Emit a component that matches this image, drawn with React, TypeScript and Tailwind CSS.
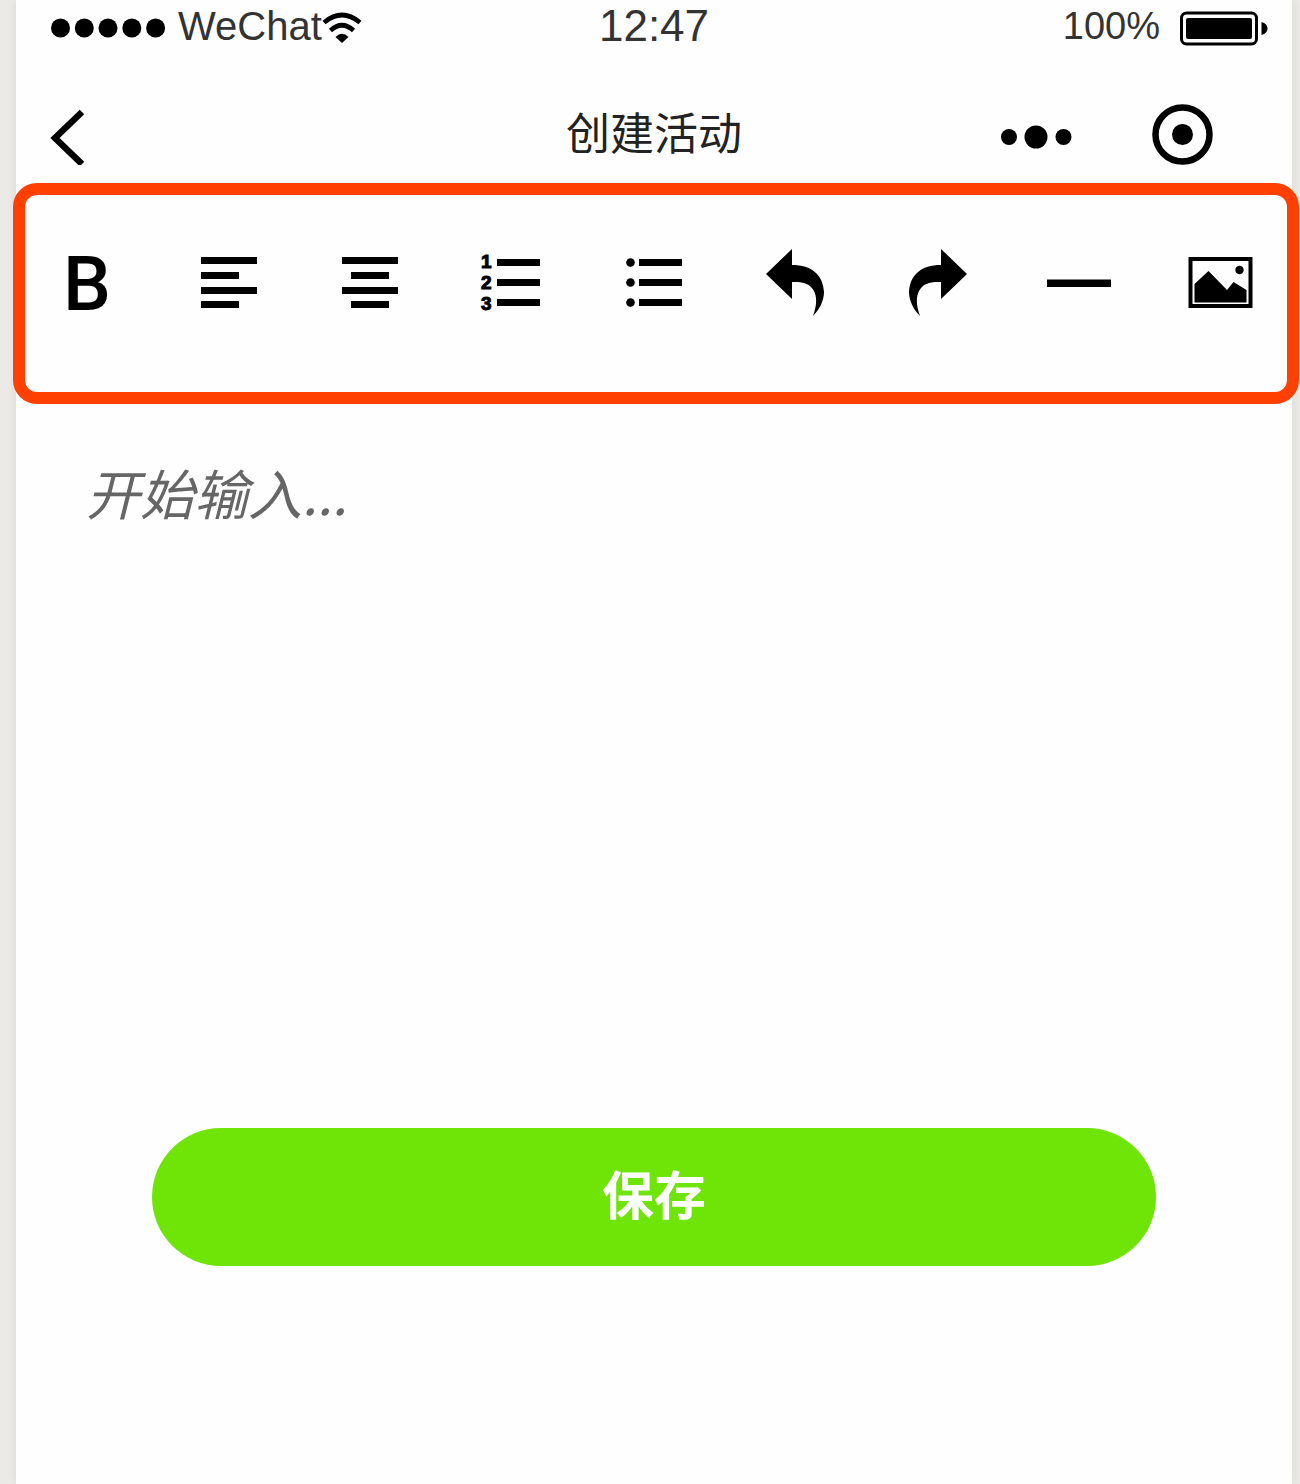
import React, { useState } from 'react';

interface Tool {
  name: string;
  icon: React.ReactNode;
}

const UNDO_PATH =
  'M2 23 L28 -2 V14 C48 14 59 24 60 41 C60 50 55 59 49 65 C53 54 53 46 50 40 C46 32 38 30.5 28 31 V48 Z';

const tools: Tool[] = [
  {
    name: '加粗',
    icon: <span className="pt-0.5 font-['Roboto',sans-serif] text-[76px] font-medium leading-16">B</span>,
  },
  {
    name: '左对齐',
    icon: <path d="M4 6h56v7H4zM4 21h38v7H4zM4 36h56v7H4zM4 50h38v7H4z" />,
  },
  {
    name: '居中对齐',
    icon: <path d="M4 6h56v7H4zM13 21h38v7H13zM4 36h56v7H4zM13 50h38v7H13z" />,
  },
  {
    name: '有序列表',
    icon: (
      <>
        <path d="M17 8h43v7H17zM17 28h43v7H17zM17 48h43v7H17z" />
        <g className="font-['Liberation_Sans',sans-serif] text-[19px] font-bold" stroke="currentColor" strokeWidth="1">
          <text x="1" y="17">1</text>
          <text x="1" y="38">2</text>
          <text x="1" y="59">3</text>
        </g>
      </>
    ),
  },
  {
    name: '无序列表',
    icon: (
      <>
        <path d="M17 8h43v7H17zM17 28h43v7H17zM17 48h43v7H17z" />
        <circle cx="8.5" cy="11.5" r="4.3" />
        <circle cx="8.5" cy="31.5" r="4.3" />
        <circle cx="8.5" cy="51.5" r="4.3" />
      </>
    ),
  },
  { name: '撤销', icon: <path d={UNDO_PATH} /> },
  { name: '重做', icon: <path d={UNDO_PATH} transform="translate(63 0) scale(-1 1)" /> },
  { name: '分割线', icon: <path d="M0 28.5h64V36H0z" /> },
  {
    name: '插入图片',
    icon: (
      <>
        <rect x="1.5" y="8" width="60" height="47" fill="none" stroke="currentColor" strokeWidth="4" />
        <path d="M5.5 33 L19.5 20 L38 39 L44.5 31 L57.5 39 V51.5 H5.5 Z" />
        <circle cx="50.5" cy="19" r="4.2" />
      </>
    ),
  },
];

const StatusBar: React.FC = () => (
  <div className="grid h-[52px] grid-cols-[1fr_auto_1fr] items-center text-[#333]">
    <div className="flex items-center pl-[34px]">
      <svg className="mr-3 mt-1 h-5 w-[116px] text-black" viewBox="0 0 116 20" fill="currentColor">
        <circle cx="10.5" cy="10" r="9.5" />
        <circle cx="34.3" cy="10" r="9.5" />
        <circle cx="58" cy="10" r="9.5" />
        <circle cx="81.8" cy="10" r="9.5" />
        <circle cx="105.6" cy="10" r="9.5" />
      </svg>
      <span className="text-[40px] leading-[52px]">WeChat</span>
      <svg className="mt-1 h-8 w-10 text-black" viewBox="0 0 40 32" fill="none" stroke="currentColor" strokeWidth="4.6">
        <path d="M2 10.5 Q20 -4.5 38 10.5" />
        <path d="M8.5 18.5 Q20 8 31.5 18.5" />
        <path d="M13.5 25 Q20 18.5 26.5 25 L20 31 Z" fill="currentColor" stroke="none" />
      </svg>
    </div>
    <span className="text-[44px] leading-[52px]">12:47</span>
    <div className="flex items-center justify-end gap-5 pr-6">
      <span className="text-[38px] leading-[52px]">100%</span>
      <svg className="mt-1 h-9 w-[88px] text-black" viewBox="0 0 88 36" fill="currentColor">
        <rect x="1.5" y="3" width="75" height="31" rx="5" fill="none" stroke="currentColor" strokeWidth="3" />
        <rect x="6" y="8" width="66" height="21" rx="2" />
        <path d="M81.5 12 C89.5 14 89.5 23 81.5 25 Z" />
      </svg>
    </div>
  </div>
);

const NavBar: React.FC = () => (
  <header className="mt-[34px] grid h-[97px] grid-cols-[1fr_auto_1fr] items-center">
    <div className="flex pl-[34px] pt-1">
      <button type="button" aria-label="返回">
        <svg className="h-14 w-9" viewBox="0 0 36 56" fill="none" stroke="currentColor" strokeWidth="6.5">
          <path d="M32 3 L5 29 L32 55" />
        </svg>
      </button>
    </div>
    <h1 className="text-[44px] leading-[56px] text-[#222]">创建活动</h1>
    <div className="flex items-center justify-end gap-[78px] pr-[78px]">
      <button type="button" aria-label="更多">
        <svg className="mt-1 h-6 w-[74px]" viewBox="0 0 74 24" fill="currentColor">
          <circle cx="9" cy="12" r="8" />
          <circle cx="36" cy="12" r="11.5" />
          <circle cx="63.5" cy="12" r="8" />
        </svg>
      </button>
      <button type="button" aria-label="关闭">
        <svg className="h-[62px] w-[62px]" viewBox="0 0 62 62">
          <circle cx="30.5" cy="30.5" r="27" fill="none" stroke="currentColor" strokeWidth="6.5" />
          <circle cx="30.5" cy="30.5" r="10.5" fill="currentColor" />
        </svg>
      </button>
    </div>
  </header>
);

const Toolbar: React.FC = () => (
  <div className="relative">
    <div className="grid grid-cols-9 justify-items-center pb-[89px] pt-[68px]">
      {tools.map((tool) => (
        <button key={tool.name} type="button" aria-label={tool.name} className="flex h-16 w-16 items-center justify-center">
          {tool.name === '加粗' ? (
            tool.icon
          ) : (
            <svg className="h-16 w-16 overflow-visible" viewBox="0 0 64 64" fill="currentColor">
              {tool.icon}
            </svg>
          )}
        </button>
      ))}
    </div>
    {/* Highlight frame around the toolbar */}
    <div className="pointer-events-none absolute inset-y-0 -left-[3px] -right-[7px] rounded-3xl border-12 border-[#ff4000]" />
  </div>
);

const App: React.FC = () => {
  const [content, setContent] = useState('');

  return (
    <div className="min-h-screen overflow-hidden bg-[#ebeae6] pl-4 pr-2 font-['Liberation_Sans','Noto_Sans_CJK_SC',sans-serif] text-black">
      <main className="flex min-h-screen flex-col bg-[#fefefe] shadow-[0_0_10px_rgba(0,0,0,0.08)]">
        <StatusBar />
        <NavBar />
        <Toolbar />
        <textarea
          aria-label="活动内容"
          value={content}
          onChange={(e) => setContent(e.target.value)}
          placeholder="开始输入..."
          className="block w-full flex-1 resize-none px-[70px] pt-13 font-['Noto_Sans_CJK_SC',sans-serif] text-[54px] leading-[72px] outline-none placeholder:italic placeholder:text-[#666]"
        />
        <div className="px-[136px] pb-[218px]">
          <button type="button" className="h-[138px] w-full rounded-full bg-[#6fe407] text-[52px] font-bold text-white">
            保存
          </button>
        </div>
      </main>
    </div>
  );
};

export default App;
